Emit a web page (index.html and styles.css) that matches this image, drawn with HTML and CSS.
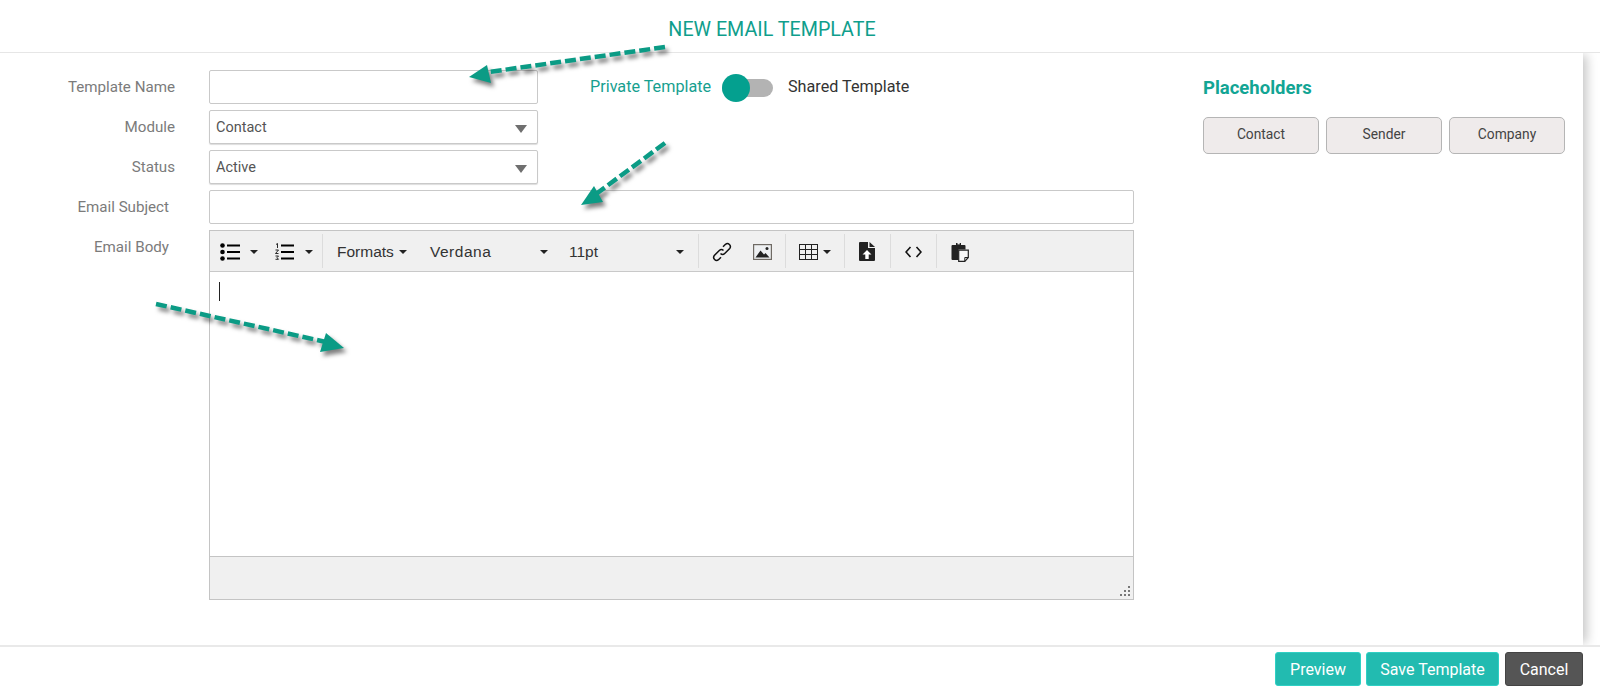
FILE: index.html
```html
<!DOCTYPE html>
<html lang="en">
<head>
<meta charset="utf-8">
<title>New Email Template</title>
<link rel="stylesheet" href="styles.css">
</head>
<body>
<div class="app">
  <header class="top"><h1 class="title">NEW EMAIL TEMPLATE</h1></header>
  <main class="main">
    <form class="form">
      <div class="row">
        <label class="label">Template Name</label>
        <input class="field short" type="text">
        <div class="toggle-wrap">
          <span class="private">Private Template</span>
          <span class="toggle"><span class="knob"></span></span>
          <span class="shared">Shared Template</span>
        </div>
      </div>
      <div class="row">
        <label class="label">Module</label>
        <span class="select-wrap"><select class="field select"><option>Contact</option></select></span>
      </div>
      <div class="row">
        <label class="label">Status</label>
        <span class="select-wrap"><select class="field select"><option>Active</option></select></span>
      </div>
      <div class="row">
        <label class="label inset">Email Subject</label>
        <input class="field long" type="text">
      </div>
      <div class="row body-row">
        <label class="label inset body-label">Email Body</label>
        <div class="editor">
          <div class="toolbar">
            <div class="group g1">
              <span class="tool w-bul"><svg width="20" height="18" viewBox="0 0 20 18"><circle cx="2.5" cy="2.5" r="2.3"/><circle cx="2.5" cy="9" r="2.3"/><circle cx="2.5" cy="15.5" r="2.3"/><path d="M7 1.500h13v2H7zM7 8h13v2H7zM7 14.500h13v2H7z"/></svg></span>
              <span class="caret c1"></span>
              <span class="tool w-num"><svg width="19" height="18" viewBox="0 0 19 18"><path d="M6 1.500h13v2H6zM6 8h13v2H6zM6 14.500h13v2H6z"/><path d="M1 1.500l1.500-1v4.500M0.500 7h3l-3 3.500h3M0.500 13h3l-1.500 1.700 1.500 1.600h-3" fill="none" stroke="#111" stroke-width=".9"/></svg></span>
              <span class="caret c2"></span>
            </div>
            <div class="group g2">
              <span class="menu m-formats">Formats<span class="caret"></span></span>
              <span class="menu m-font"><span class="wide">Verdana</span><span class="caret"></span></span>
              <span class="menu m-size">11pt<span class="caret"></span></span>
            </div>
            <div class="group g3">
              <svg class="ic-link" width="20" height="20" viewBox="0 0 20 20" fill="none" stroke="#111" stroke-width="1.500"><path d="M8.500 11.500a3 3 0 0 0 4.200 0l5-5a3 3 0 0 0-4.200-4.200l-2.500 2.500"/><path d="M11.500 8.500a3 3 0 0 0-4.200 0l-5 5a3 3 0 0 0 4.200 4.200l2.500-2.500"/></svg>
              <svg class="ic-image" width="19" height="16" viewBox="0 0 19 16"><rect x=".6" y=".6" width="17.800" height="14.800" fill="#eef0f2" stroke="#6f6a64" stroke-width="1.200"/><path d="M2.500 13.500l5-7 3.500 4 1.500-1.500 4 4.500z" fill="#222"/><circle cx="14" cy="4.500" r="1.500" fill="#222"/></svg>
            </div>
            <div class="group g4">
              <svg width="19" height="16" viewBox="0 0 19 16" fill="none" stroke="#222" stroke-width="1"><rect x=".5" y=".5" width="18" height="15"/><path d="M.5 5.500h18M.5 10.500h18M6.500 .5v15M12.500 .5v15"/></svg>
              <span class="caret c3"></span>
            </div>
            <div class="group g5">
              <svg width="16" height="19" viewBox="0 0 16 19"><path d="M0 1a1 1 0 0 1 1-1h8v6h7v12a1 1 0 0 1-1 1H1a1 1 0 0 1-1-1z" fill="#222"/><path d="M10.500 0l5.500 5h-5.500z" fill="#222"/><path d="M8 8l4.500 4.500h-2.800V17H6.300v-4.500H3.500z" fill="#fff"/></svg>
            </div>
            <div class="group g6">
              <svg width="17" height="12" viewBox="0 0 17 12" fill="none" stroke="#111" stroke-width="1.600"><path d="M5.500 1L1 6l4.500 5M11.500 1L16 6l-4.500 5"/></svg>
            </div>
            <div class="group g7">
              <svg width="18" height="20" viewBox="0 0 18 20"><path d="M1.500 3H5V1h5v2h3.500a1 1 0 0 1 1 1v3.500H7.500V18H1.500a1 1 0 0 1-1-1V4a1 1 0 0 1 1-1z" fill="#222"/><path d="M6.500 .6h2.200v1.800H6.500z" fill="#efefef"/><path d="M7.700 8.200h9.600v7.300l-3.500 3.800H7.700z" fill="#f8f8f8" stroke="#222" stroke-width="1.200"/><path d="M17.300 15.500h-3.500v3.800" fill="none" stroke="#222" stroke-width="1"/></svg>
            </div>
          </div>
          <div class="edit-area"><span class="cursor"></span></div>
          <div class="statusbar">
            <svg class="grip" width="10" height="10" viewBox="0 0 10 10" fill="#777"><path d="M8 0h2v2H8zM8 4h2v2H8zM8 8h2v2H8zM4 4h2v2H4zM4 8h2v2H4zM0 8h2v2H0z"/></svg>
          </div>
        </div>
      </div>
    </form>
    <aside class="side">
      <h2 class="side-title">Placeholders</h2>
      <div class="chips">
        <button class="chip" type="button">Contact</button>
        <button class="chip" type="button">Sender</button>
        <button class="chip" type="button">Company</button>
      </div>
    </aside>
  </main>
  <footer class="foot">
    <button class="btn teal w-prev" type="button">Preview</button>
    <button class="btn teal w-save" type="button">Save Template</button>
    <button class="btn dark w-cancel" type="button">Cancel</button>
  </footer>
  <svg class="arrows" width="1600" height="688" viewBox="0 0 1600 688">
    <g class="arrow-lines">
      <path d="M665 47L482 73"/>
      <path d="M665 143L596 194"/>
      <path d="M156 304L326 342"/>
    </g>
    <g class="arrow-heads">
      <path d="M469 77L487 65L491 83z"/>
      <path d="M581 205L594 186L603 202z"/>
      <path d="M344 348L326 333L320 352z"/>
    </g>
  </svg>
</div>
</body>
</html>
```
FILE: styles.css
```css
* { box-sizing: border-box; }
html, body { margin: 0; padding: 0; background: #fff; }
body { font-family: Roboto, "Liberation Sans", sans-serif; overflow: hidden; }
.app { position: relative; width: 1600px; height: 688px; display: flex; flex-direction: column; }

.top { height: 53px; border-bottom: 1px solid #e6e6e6; display: flex; justify-content: center; }
.title { margin: 18px 0 0 -56px; height: 24px; font-size: 19.700px; line-height: 24px; font-weight: 400; color: #0f9e8c; }

.main { flex: 1; width: 1583px; display: flex; padding-top: 17px; box-shadow: 6px 0 10px -2px rgba(0,0,0,.22); clip-path: inset(0 -20px 0 0); }
.form { width: 1134px; display: flex; flex-direction: column; gap: 6px; }
.row { display: flex; align-items: center; }
.label { width: 175px; margin-right: 34px; text-align: right; font-size: 15.150px; color: #7b7b7b; }
.label.inset { width: 169px; margin-right: 40px; }
.field { height: 34px; border: 1px solid #c9c9c9; border-radius: 2px; background: #fff; font: 14.500px Roboto, sans-serif; color: #555; }
.short { width: 329px; }
.long { width: 925px; }
.select-wrap { position: relative; display: block; width: 329px; }
.select { display: block; width: 100%; appearance: none; padding: 0 6px; box-shadow: 0 1px 1px #ddd; }
.select-wrap::after { content: ""; position: absolute; right: 11px; top: 15px; border: 6.500px solid transparent; border-top: 8px solid #6f6f6f; border-bottom: 0; }

.toggle-wrap { display: flex; align-items: center; margin-left: 52px; padding-bottom: 1px; font-size: 16.200px; }
.private { color: #16a08f; width: 132px; }
.shared { color: #333; margin-left: 15px; }
.toggle { position: relative; display: block; width: 51px; height: 18px; top: 1px; background: #b3b3b3; border-radius: 9px; }
.knob { position: absolute; left: 0; top: -5px; width: 28px; height: 28px; border-radius: 50%; background: #04a08f; }

.body-row { align-items: flex-start; }
.body-label { margin-top: 8px; }
.editor { width: 925px; height: 370px; border: 1px solid #c4c4c4; display: flex; flex-direction: column; }
.toolbar { height: 41px; background: #f0f0f0; border-bottom: 1px solid #c9c9c9; display: flex; padding: 3px 0; color: #333; font: 15.500px "Liberation Sans", Arial, sans-serif; }
.group { display: flex; align-items: center; height: 100%; padding-top: 1px; border-right: 1px solid #dcdcdc; flex: none; }
.group:last-child { border-right: 0; }
.caret { display: inline-block; border: 4px solid transparent; border-top: 4px solid #222; border-bottom: 0; flex: none; }
.g1 { width: 113px; padding-left: 10px; }
.w-bul { display: flex; width: 20px; }
.c1 { margin-left: 10px; }
.w-num { display: flex; width: 19px; margin-left: 17px; }
.c2 { margin-left: 11px; }
.g2 { width: 376px; padding-left: 14px; }
.menu { display: flex; align-items: center; flex: none; }
.m-formats { width: 93px; }
.m-formats .caret { margin-left: 5px; }
.m-font { width: 139px; justify-content: space-between; padding-right: 21px; }
.wide { letter-spacing: .5px; }
.m-size { width: 122px; justify-content: space-between; padding-right: 7px; }
.g3 { width: 87px; padding-left: 13px; gap: 21px; }
.g4 { width: 59px; padding-left: 13px; }
.c3 { margin-left: 5px; }
.g5 { width: 46px; padding-left: 14px; }
.g6 { width: 46px; padding-left: 14px; }
.g7 { padding-left: 14px; }
svg { flex: none; }
.edit-area { flex: 1; background: #fff; padding: 10px 0 0 9px; }
.cursor { display: block; width: 1px; height: 19px; background: #222; }
.statusbar { height: 43px; background: #f0f0f0; border-top: 1px solid #c4c4c4; display: flex; justify-content: flex-end; align-items: flex-end; padding: 0 3px 3px 0; }

.side { margin-left: 69px; width: 362px; }
.side-title { margin: 6px 0 17px; height: 24px; font-size: 18.500px; line-height: 24px; font-weight: 700; color: #12a594; }
.chips { display: flex; gap: 7px; }
.chip { width: 116px; height: 37px; padding: 0 0 3px; border: 1px solid #b5b5b5; border-radius: 5px; background: #efebeb; font: 13.800px Roboto, sans-serif; color: #444; }

.foot { height: 43px; border-top: 2px solid #e9e9e9; display: flex; justify-content: flex-end; gap: 5px; padding: 5px 17px 0 0; }
.btn { height: 34px; padding: 0; border-radius: 3px; font: 400 16px Roboto, sans-serif; color: #fff; }
.teal { background: #22bbb0; border: 1px solid #2fd0c4; }
.dark { background: #555; border: 1px solid #444; }
.w-prev { width: 86px; }
.w-save { width: 133px; }
.w-cancel { width: 78px; margin-left: 1px; }

.arrows { position: absolute; left: 0; top: 0; pointer-events: none; filter: drop-shadow(3px 4px 2px rgba(0,0,0,.5)); }
.arrow-lines path { fill: none; stroke: #0b9b85; stroke-width: 4.500; stroke-dasharray: 11 4; }
.arrow-heads path { fill: #0b9b85; }
```
